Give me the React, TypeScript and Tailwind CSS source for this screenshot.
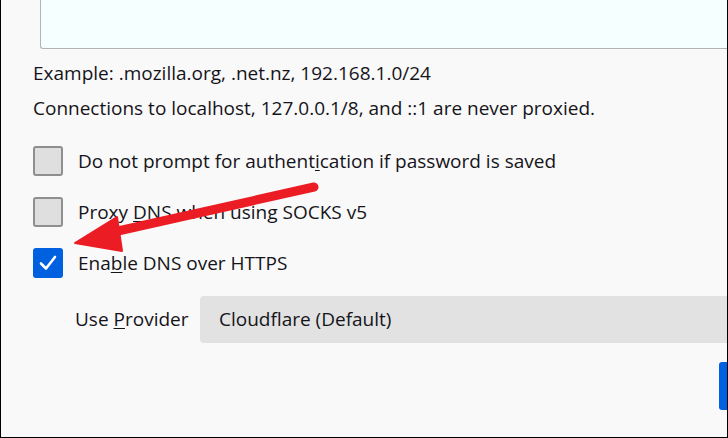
import React from 'react'

const FONT = { fontFamily: '"Open Sans", "Noto Sans", sans-serif' }

function Box({ checked }: { checked?: boolean }) {
  if (checked) {
    return (
      <div className="w-[30px] h-[30px] shrink-0 rounded-[3px] bg-[#0061e0] flex items-center justify-center">
        <svg width="22" height="22" viewBox="0 0 22 22">
          <path d="M4 11.5 L9 16.5 L18 5" fill="none" stroke="#fff" strokeWidth="2.6" strokeLinecap="round" strokeLinejoin="round" />
        </svg>
      </div>
    )
  }
  return <div className="w-[30px] h-[30px] shrink-0 rounded-[3px] bg-[#dfdfdf] border-2 border-[#8f8f8f]" />
}

function Row({ checked, children }: { checked?: boolean; children: React.ReactNode }) {
  return (
    <div className="flex items-center gap-[15px] h-[30px]">
      <Box checked={checked} />
      <span className="text-[19px] text-[#15141a]">{children}</span>
    </div>
  )
}

export default function App() {
  return (
    <div
      className="relative w-[728px] h-[438px] overflow-hidden bg-[#f9f9f9] border-l border-r border-b border-black flex flex-col"
      style={FONT}
    >
      {/* textarea (cut off at top) */}
      <div className="ml-[39px] h-[49px] shrink-0 bg-[#f6ffff] border-l border-b border-[#b3b3b3] rounded-bl-[3px]" />

      <div className="pl-[32px] text-[19px] text-[#15141a] leading-[24px]">
        <div className="mt-[12px]">Example: .mozilla.org, .net.nz, 192.168.1.0/24</div>
        <div className="mt-[11px]">Connections to localhost, 127.0.0.1/8, and ::1 are never proxied.</div>
      </div>

      <div className="pl-[32px] mt-[26px] flex flex-col gap-[21px]">
        <Row>
          Do not prompt for authent<u className="underline-offset-2">i</u>cation if password is saved
        </Row>
        <Row>
          Proxy <u className="underline-offset-2">D</u>NS when using SOCKS v5
        </Row>
        <Row checked>
          Ena<u className="underline-offset-2">b</u>le DNS over HTTPS
        </Row>
      </div>

      <div className="pl-[74px] mt-[18px] flex items-center">
        <span className="w-[125px] shrink-0 text-[19px] text-[#15141a]">
          Use <u className="underline-offset-2">P</u>rovider
        </span>
        <div className="flex-1 h-[47px] rounded-l-[4px] bg-[#e2e2e2] flex items-center pl-[19px] text-[19px] text-[#15141a]">
          Cloudflare (Default)
        </div>
      </div>

      <div className="flex justify-end mt-[19px]">
        <div className="w-[8px] h-[48px] rounded-l-[3px] bg-[#0061e0]" />
      </div>

      {/* red annotation arrow */}
      <svg className="absolute left-0 top-0 pointer-events-none" width="728" height="438">
        <line x1="313" y1="187" x2="108" y2="233" stroke="#ec1c24" strokeWidth="9" strokeLinecap="round" />
        <polygon points="74,243 116,217 121,251" fill="#ec1c24" stroke="#ec1c24" strokeWidth="2" strokeLinejoin="round" />
      </svg>
    </div>
  )
}
